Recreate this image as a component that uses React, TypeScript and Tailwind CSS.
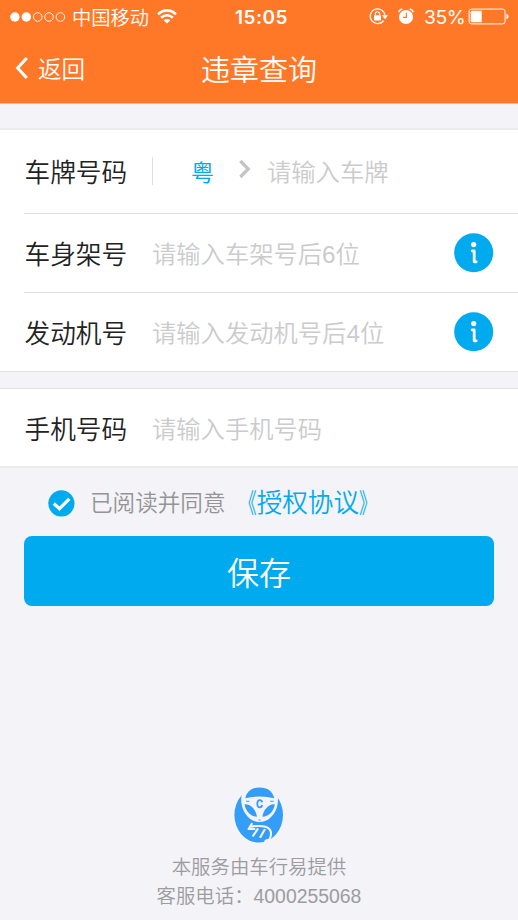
import type { ReactNode } from "react";

const CJK = "font-['Noto_Sans_CJK_SC',sans-serif]";

function StatusBar() {
  return (
    <div className="flex h-[33px] items-center pl-[10px] text-[19.3px] leading-[32px]">
      <svg width="56" height="12" viewBox="0 0 56 12" className="shrink-0">
        <circle cx="4.9" cy="6" r="4.7" fill="white" />
        <circle cx="16.3" cy="6" r="4.7" fill="white" />
        <g fill="none" stroke="white" strokeWidth="0.9">
          <circle cx="27.7" cy="6" r="4.3" />
          <circle cx="39" cy="6" r="4.3" />
          <circle cx="50.4" cy="6" r="4.3" />
        </g>
      </svg>
      <span className="ml-[6px] w-[78px] whitespace-nowrap font-[350]">中国移动</span>
      <svg width="20" height="15" viewBox="0 0 20 15" className="ml-[7px] shrink-0">
        <g fill="none" stroke="white" strokeWidth="2.5">
          <path d="M1 5.2Q10-2.4 19 5.2" />
          <path d="M4.1 8.8Q10 3.6 15.9 8.8" />
        </g>
        <path d="M6.6 11.3Q10 8.5 13.4 11.3L10 14.6Z" fill="white" />
      </svg>
      <span className="mt-[2px] ml-[58px] w-[54px] whitespace-nowrap font-['Inter',sans-serif] text-[19px] font-semibold tracking-[0.5px]">
        15:05
      </span>
      <svg width="19" height="17" viewBox="0 0 19 17" className="ml-[80px] shrink-0">
        <path d="M14.6 12.6A7.4 7.4 0 1 1 15.9 6.9" fill="none" stroke="white" strokeWidth="1.2" />
        <path d="M13 7.2h6l-3 4Z" fill="white" />
        <rect x="5" y="7.3" width="7" height="5.2" rx="0.6" fill="white" />
        <path d="M6.4 7.6V5.8a2.1 2.1 0 0 1 4.2 0v1.8" fill="none" stroke="white" strokeWidth="1.1" />
      </svg>
      <svg width="16" height="17" viewBox="0 0 16 17" className="ml-[10px] shrink-0">
        <circle cx="8" cy="9" r="7" fill="white" />
        <path d="M.7 4.3Q1.5 1.5 4.3 1M15.3 4.3Q14.5 1.5 11.7 1" fill="none" stroke="white" strokeWidth="1.3" />
        <path d="M8.4 4.8V9.4H5" fill="none" stroke="#ff7827" strokeWidth="1.1" />
      </svg>
      <span className="ml-[10px] w-[40px] whitespace-nowrap font-['Inter',sans-serif] text-[19.3px] font-normal tracking-[-0.4px]">
        35%
      </span>
      <svg width="41" height="17" viewBox="0 0 41 17" className="ml-[4px] shrink-0">
        <rect x="1.1" y="1.1" width="36" height="14.8" rx="2.5" fill="none" stroke="white" strokeWidth="1" />
        <path d="M2.7 4A1.3 1.3 0 0 1 4 2.7H13.7v11.6H4a1.3 1.3 0 0 1-1.3-1.3Z" fill="white" />
        <path d="M38.5 5.7Q40.5 6.5 40.5 8.5T38.5 11.3Z" fill="white" />
      </svg>
    </div>
  );
}

function InfoIcon() {
  return (
    <svg width="40" height="40" viewBox="0 0 40 40" className="shrink-0">
      <circle cx="19.7" cy="19.7" r="19.5" fill="#00aaef" />
      <circle cx="19.7" cy="11.6" r="2.6" fill="white" />
      <path d="M18.2 17.8h2v11h2" fill="none" stroke="white" strokeWidth="2.8" strokeLinecap="round" strokeLinejoin="round" />
    </svg>
  );
}

function Label({ children }: { children: ReactNode }) {
  return <span className="w-[127.5px] shrink-0 text-[25.7px] leading-[36px] font-[350] text-[#222]">{children}</span>;
}

function Hint({ children }: { children: ReactNode }) {
  return <span className="flex-1 whitespace-nowrap text-[24.3px] leading-[36px] font-[350] text-[#cbcbcd]">{children}</span>;
}

function Digit({ children }: { children: ReactNode }) {
  return <span className="font-['Liberation_Sans',sans-serif] leading-none">{children}</span>;
}

function Logo() {
  return (
    <svg width="50" height="56" viewBox="0 0 50 56" className="shrink-0">
      <ellipse cx="24.7" cy="28" rx="24.3" ry="27.5" fill="#349df8" />
      <path d="M8.2 0V5.5C6 13 7.4 21 11.6 27C15 32 19.5 35 25.5 35S36 32 39.6 27C44 21 45 13 43 5.5V0Z" fill="#f4f4f8" />
      <path d="M11.4 11.2C12.6 4.5 18 .5 25.7 .5S38.8 4.5 40.2 11.2Q25.7 8 11.4 11.2Z" fill="#349df8" />
      <path d="M10.6 17.4C16.5 16.6 22 22.6 23 29.8C17 29.6 11.6 24.4 10.6 17.4ZM40.8 17.4C35 16.6 29.4 22.6 28.4 29.8C34.4 29.6 39.8 24.4 40.8 17.4Z" fill="#349df8" />
      <path d="M12 14.3h3.4M36.2 14.3h3.4M24.6 33h2" stroke="#349df8" strokeWidth="1.1" />
      <path d="M28.2 15.3Q27.8 13.2 25.8 13.2Q23.3 13.2 23.3 16.8T25.8 20.3Q27.8 20.3 28.2 18" fill="none" stroke="#349df8" strokeWidth="1.8" />
      <path d="M17.8 36.9L14.6 42H20.4M17.8 39.6Q26 38.2 31.5 39.8Q37.4 41.6 37 47.4Q36.8 50 35.2 52.6M23.6 42.2L19.2 48.6M30.6 42.8L26.4 50" fill="none" stroke="#f4f4f8" strokeWidth="2.1" strokeLinecap="round" strokeLinejoin="round" />
      <path d="M30.4 53.4Q32 51.9 33.2 51.9L36.5 52V56H30.4Z" fill="#f4f4f8" />
    </svg>
  );
}

export default function App() {
  return (
    <div className={`flex h-[920px] w-[518px] flex-col overflow-hidden bg-[#f3f3f8] ${CJK}`}>
      <header className="h-[104px] shrink-0 border-b border-[#ffb88d] bg-[#ff7827] text-white">
        <StatusBar />
        <div className="grid h-[70px] grid-cols-[1fr_auto_1fr] items-center">
          <div className="flex items-center pl-[15px]">
            <svg width="14" height="22" viewBox="0 0 14 22">
              <path d="M11.8 1L2.6 11L11.8 21" fill="none" stroke="white" strokeWidth="3" />
            </svg>
            <span className="ml-[9px] text-[23.6px] leading-[34px] font-[350]">返回</span>
          </div>
          <h1 className="text-[29px] leading-[40px] font-[350]">违章查询</h1>
        </div>
      </header>

      <section className="mt-[24px] shrink-0 border-t-2 border-b border-t-[#ebebec] border-b-[#e2e2e4] bg-white">
        <div className="ml-[24px] flex h-[84px] items-center border-b border-[#e0e0e1] pb-[2px] pl-[0.5px]">
          <Label>车牌号码</Label>
          <div className="h-[28px] w-px bg-[#dedee1]" />
          <span className="ml-[38px] text-[23px] leading-[34px] text-[#00aaef]">粤</span>
          <svg width="13" height="20" viewBox="0 0 13 20" className="mr-[16px] mb-[3px] ml-[24px]">
            <path d="M2.3 2L10.3 10L2.3 18" fill="none" stroke="#c4c4c8" strokeWidth="3.2" />
          </svg>
          <Hint>请输入车牌</Hint>
        </div>
        <div className="ml-[24px] flex h-[79px] items-center border-b border-[#e0e0e1] pr-[24px] pl-[0.5px]">
          <Label>车身架号</Label>
          <Hint>请输入车架号后<Digit>6</Digit>位</Hint>
          <InfoIcon />
        </div>
        <div className="ml-[24px] flex h-[78px] items-center pr-[24px] pl-[0.5px]">
          <Label>发动机号</Label>
          <Hint>请输入发动机号后<Digit>4</Digit>位</Hint>
          <InfoIcon />
        </div>
      </section>

      <section className="mt-[16px] shrink-0 border-t border-b-2 border-t-[#e2e2e4] border-b-[#ebebec] bg-white pl-[24.5px]">
        <div className="flex h-[77px] items-center">
          <Label>手机号码</Label>
          <Hint>请输入手机号码</Hint>
        </div>
      </section>

      <div className="flex h-[68px] shrink-0 items-center pl-[48px]">
        <svg width="27" height="27" viewBox="0 0 27 27" className="mt-[2px] shrink-0">
          <circle cx="13.4" cy="13.4" r="13.1" fill="#00aaef" />
          <path d="M5.8 13.5L11.5 18.7L21.3 8.9" fill="none" stroke="white" strokeWidth="3.2" />
        </svg>
        <span className="ml-[15px] text-[22.6px] leading-[34px] font-[350] text-[#949496]">已阅读并同意</span>
        <span className="mb-[3px] ml-[5.5px] flex whitespace-nowrap text-[25.6px] leading-[36px] font-[350] text-[#00aaef]">
          <span className="origin-right scale-x-[0.68] scale-y-[1.06]">《</span>
          <span>授权协议</span>
          <span className="origin-left scale-x-[0.68] scale-y-[1.06]">》</span>
        </span>
      </div>

      <button className="mx-[24px] h-[70px] shrink-0 rounded-[8px] bg-[#00aaef] text-[32px] leading-[46px] font-[350] text-white">保存</button>

      <footer className="mt-auto flex flex-col items-center pb-[11px] text-[19.4px] font-[350] text-[#9c9c9e]">
        <Logo />
        <p className="mt-[8px] leading-[29px]">本服务由车行易提供</p>
        <p className="leading-[29px]">
          客服电话：<Digit>4000255068</Digit>
        </p>
      </footer>
    </div>
  );
}
